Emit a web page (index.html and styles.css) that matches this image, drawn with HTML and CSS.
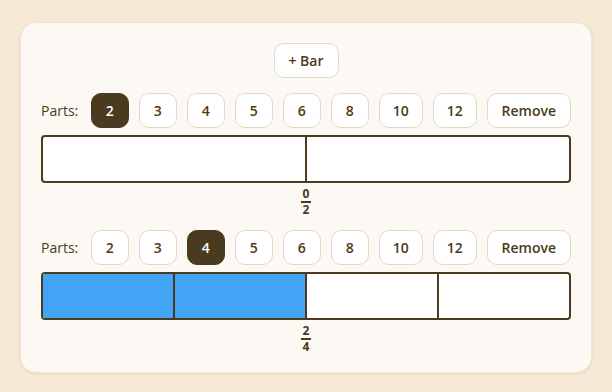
FILE: index.html
```html
<html lang="en">
<head>
    <meta charset="UTF-8">
    <meta name="viewport" content="width=device-width, initial-scale=1.0">
    <title>Fraction bars</title>
    <link rel="stylesheet" href="styles.css">
</head>
<body>
    <div class="card">
        <div class="top">
            <button class="btn add_bar">+ Bar</button>
        </div>

        <div class="bar_block">
            <div class="controls">
                <span class="label">Parts:</span>
                <button class="btn part active">2</button>
                <button class="btn part">3</button>
                <button class="btn part">4</button>
                <button class="btn part">5</button>
                <button class="btn part">6</button>
                <button class="btn part">8</button>
                <button class="btn part">10</button>
                <button class="btn part">12</button>
                <button class="btn remove">Remove</button>
            </div>
            <div class="bar">
                <div class="seg"></div>
                <div class="seg"></div>
            </div>
            <div class="fraction">
                <span class="num">0</span>
                <span class="den">2</span>
            </div>
        </div>

        <div class="bar_block">
            <div class="controls">
                <span class="label">Parts:</span>
                <button class="btn part">2</button>
                <button class="btn part">3</button>
                <button class="btn part active">4</button>
                <button class="btn part">5</button>
                <button class="btn part">6</button>
                <button class="btn part">8</button>
                <button class="btn part">10</button>
                <button class="btn part">12</button>
                <button class="btn remove">Remove</button>
            </div>
            <div class="bar">
                <div class="seg filled"></div>
                <div class="seg filled"></div>
                <div class="seg"></div>
                <div class="seg"></div>
            </div>
            <div class="fraction">
                <span class="num">2</span>
                <span class="den">4</span>
            </div>
        </div>
    </div>
</body>
</html>
```

FILE: styles.css
```css
body {
    margin: 0;
    padding: 22px 20px 0;
    background-color: #f5e9d6;
    font-family: "Open Sans", "Noto Sans", sans-serif;
    color: #4a3a20;
}
.card {
    background-color: #fcf8f3;
    border: 1px solid #efe5d5;
    border-radius: 16px;
    padding: 20px;
    height: 309px;
    box-shadow: 0 1px 3px rgba(120, 90, 40, 0.12);
}
.top {
    display: flex;
    justify-content: center;
    margin-bottom: 15px;
}
.btn {
    font-family: inherit;
    font-size: 14px;
    font-weight: 600;
    color: #4a3a20;
    background-color: #fff;
    border: 1px solid #e2d8c8;
    border-radius: 10px;
    height: 35px;
    padding: 0 14px;
    cursor: pointer;
}
.add_bar {
    width: 65px;
    padding: 0;
}
.part {
    min-width: 38px;
    padding: 0 13px;
}
.part.active {
    background-color: #4a3a20;
    border-color: #4a3a20;
    color: #fff;
}
.remove {
    width: 85px;
    padding: 0;
}
.bar_block {
    margin-bottom: 14px;
}
.controls {
    display: flex;
    align-items: center;
    column-gap: 10px;
    margin-bottom: 7px;
}
.label {
    font-size: 14px;
    font-weight: 500;
    width: 40px;
}
.bar {
    display: flex;
    height: 44px;
    border: 2px solid #4a3a20;
    border-radius: 4px;
    background-color: #fff;
    overflow: hidden;
}
.seg {
    flex: 1;
    border-left: 2px solid #4a3a20;
}
.seg:first-child {
    border-left: none;
}
.seg.filled {
    background-color: #42a4f5;
}
.fraction {
    display: flex;
    flex-direction: column;
    align-items: center;
    margin-top: 5px;
    font-size: 12px;
    font-weight: 700;
    line-height: 12px;
}
.fraction .num {
    padding: 0 2px 1px;
}
.fraction .den {
    border-top: 2px solid #4a3a20;
    padding: 1px 2px 0;
}
```
